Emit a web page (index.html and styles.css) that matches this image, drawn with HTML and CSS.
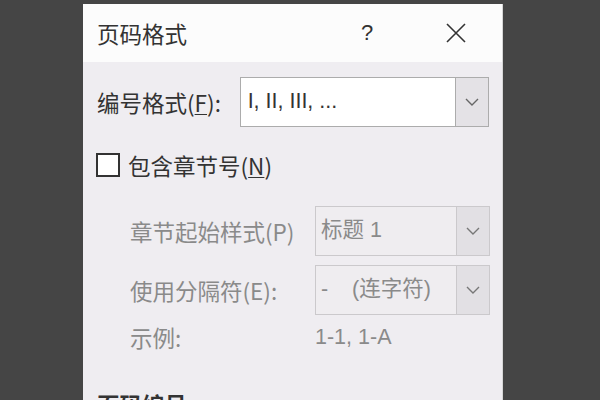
FILE: index.html
```html
<!DOCTYPE html>
<html lang="zh-CN">
<head>
    <meta charset="UTF-8">
    <title>页码格式</title>
    <link rel="stylesheet" href="styles.css">
</head>
<body>
    <div class="dialog">
        <div class="titlebar">
            <span class="title">页码格式</span>
            <span class="help">?</span>
            <span class="close">
                <svg width="20" height="20" viewBox="0 0 20 20">
                    <path d="M1 1 L19 19 M19 1 L1 19" stroke="#333" stroke-width="1.6" fill="none"/>
                </svg>
            </span>
        </div>

        <div class="content">
            <div class="row">
                <span class="label">编号格式(<u>F</u>):</span>
                <div class="combo wide">
                    <span class="value">I, II, III, ...</span>
                    <span class="arrow">
                        <svg width="14" height="8" viewBox="0 0 14 8"><path d="M1 1 L7 7 L13 1" stroke="#666" stroke-width="1.4" fill="none"/></svg>
                    </span>
                </div>
            </div>

            <div class="check-row">
                <span class="checkbox"></span>
                <span>包含章节号(<u>N</u>)</span>
            </div>

            <div class="chapter">
                <span class="label">章节起始样式(P)</span>
                <div class="combo disabled">
                    <span class="value">标题 1</span>
                    <span class="arrow">
                        <svg width="14" height="8" viewBox="0 0 14 8"><path d="M1 1 L7 7 L13 1" stroke="#777" stroke-width="1.4" fill="none"/></svg>
                    </span>
                </div>
                <span class="label">使用分隔符(E):</span>
                <div class="combo disabled">
                    <span class="value">-&nbsp;&nbsp;&nbsp;&nbsp;(连字符)</span>
                    <span class="arrow">
                        <svg width="14" height="8" viewBox="0 0 14 8"><path d="M1 1 L7 7 L13 1" stroke="#777" stroke-width="1.4" fill="none"/></svg>
                    </span>
                </div>
                <span class="label example">示例:</span>
                <span class="sample example">1-1, 1-A</span>
            </div>

            <div class="section">页码编号</div>
        </div>
    </div>
</body>
</html>
```

FILE: styles.css
```css
body {
    margin: 0;
    height: 400px;
    overflow: hidden;
    background-color: #454545;
    font-family: "Noto Sans CJK SC", "Liberation Sans", sans-serif;
    font-size: 22.5px;
    color: #333;
}
.dialog {
    margin-left: 83px;
    margin-top: 4px;
    width: 419px;
    height: 396px;
    background-color: #efedf1;
    border-right: 1px solid #d6d6d6;
}
.titlebar {
    display: flex;
    align-items: center;
    height: 58px;
    background-color: #fcfcfc;
}
.title {
    flex: 1;
    padding-left: 14px;
    line-height: 1;
}
.help {
    width: 40px;
    margin-right: 46px;
    text-align: center;
    font-family: "Liberation Sans", sans-serif;
    font-size: 22px;
}
.close {
    width: 46px;
    margin-right: 23px;
    display: flex;
    justify-content: center;
}
.content {
    padding: 15px 13px 0 14px;
}
.row {
    display: flex;
    align-items: center;
    height: 50px;
}
.row .label {
    width: 143px;
}
.label, .value, .check-row span, .sample {
    line-height: 1;
}
u {
    text-decoration-thickness: 1px;
    text-underline-offset: 2px;
}
.combo {
    display: flex;
    box-sizing: border-box;
    height: 50px;
    border: 1px solid #acacac;
    background-color: #fff;
}
.combo.wide {
    width: 250px;
}
.combo .value {
    flex: 1;
    align-self: center;
    padding-left: 7px;
    font-family: "Liberation Sans", "Noto Sans CJK SC", sans-serif;
    font-size: 21.5px;
}
.combo .arrow {
    width: 32px;
    display: flex;
    align-items: center;
    justify-content: center;
    border-left: 1px solid #acacac;
    background-color: #e4e2e6;
}
.combo.disabled {
    border-color: #cbc9cc;
    background-color: #efedf0;
    color: #8a8a8a;
}
.combo.disabled .value {
    padding-left: 5px;
}
.combo.disabled .arrow {
    border-left-color: #cbc9cc;
    background-color: #e2e0e4;
}
.check-row {
    display: flex;
    align-items: center;
    gap: 8px;
    height: 24px;
    margin-top: 26px;
}
.checkbox {
    box-sizing: border-box;
    width: 24px;
    height: 24px;
    margin-left: -1px;
    border: 2px solid #333;
    background-color: #fff;
}
.chapter {
    display: grid;
    grid-template-columns: 185px 175px;
    align-items: center;
    row-gap: 9px;
    margin-top: 29px;
    padding-left: 33px;
    color: #8a8a8a;
}
.sample {
    font-family: "Liberation Sans", sans-serif;
    font-size: 21.5px;
}
.example {
    padding-top: 2px;
}
.section {
    margin-top: 44px;
    font-weight: bold;
    line-height: 1;
}
```
